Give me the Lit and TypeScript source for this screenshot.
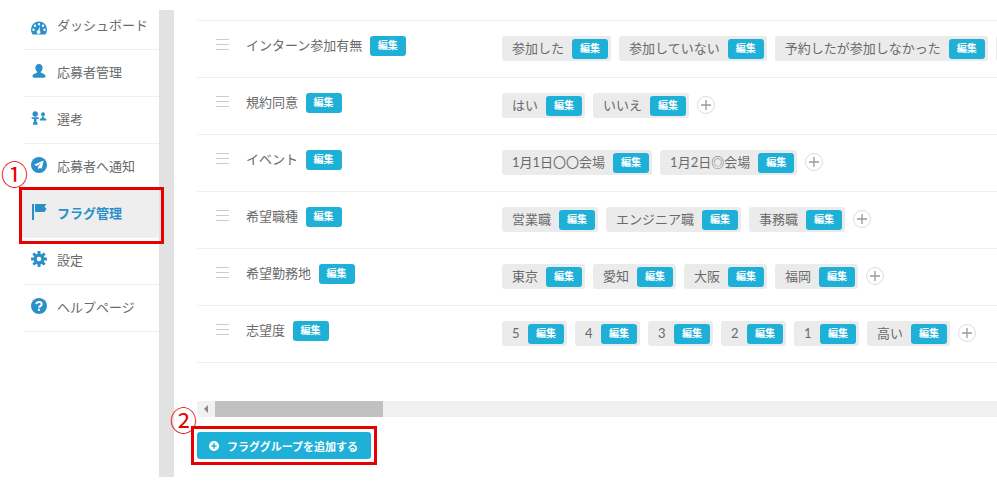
import { LitElement, html, css, svg } from "lit";
import { customElement } from "lit/decorators.js";

const BLUE = "#2b8fc9";
const icons: Record<string, unknown> = {
  dash: svg`<svg class="low" viewBox="0 0 16 16" width="16" height="16"><path fill="${BLUE}" fill-rule="evenodd" d="M8 1.500a8 8 0 0 1 8 8c0 1.900-.6 3.600-1.600 5H1.600A8 8 0 0 1 0 9.500a8 8 0 0 1 8-8zM8 3a1.200 1.200 0 1 0 0 2.400A1.200 1.200 0 0 0 8 3zM4 4.600a1.200 1.200 0 1 0 0 2.400 1.200 1.200 0 0 0 0-2.400zM12 4.600a1.200 1.200 0 1 0 0 2.400 1.200 1.200 0 0 0 0-2.400zM2.500 8.500a1.200 1.200 0 1 0 0 2.400 1.200 1.200 0 0 0 0-2.400zM13.500 8.500a1.200 1.200 0 1 0 0 2.400 1.200 1.200 0 0 0 0-2.400zM8.900 6.500 7.200 10.300a1.800 1.800 0 1 0 1.500.4z"/></svg>`,
  user: svg`<svg viewBox="0 0 16 16" width="16" height="16"><path fill="${BLUE}" d="M8 1c2.200 0 3.600 1.700 3.600 3.900 0 1.500-.7 2.900-1.700 3.700v.9c0 .6 4.600 1.300 4.600 3.600 0 1-.7 1.600-1.700 1.600H3.200c-1 0-1.700-.6-1.700-1.600 0-2.300 4.600-3 4.600-3.600v-.9C5.100 7.800 4.400 6.400 4.400 4.900 4.400 2.700 5.800 1 8 1z"/></svg>`,
  select: svg`<svg viewBox="0 0 16 16" width="16" height="16"><g fill="${BLUE}"><circle cx="4.200" cy="4" r="2.700"/><path d="M.7 7.300h7v1.800H5.500v3l1 .5v2.200H2v-2.200l1-.5v-3H.7z"/><circle cx="12" cy="4.300" r="2"/><path d="M11 6.500h2l.4 1.700 2 .9v1.300H8.800V9.100l1.800-.9z"/></g></svg>`,
  plane: svg`<svg viewBox="0 0 16 16" width="16" height="16"><circle cx="8" cy="8" r="8" fill="${BLUE}"/><path fill="#fff" d="M12.600 3.400 3 7.800l2.900 1.300 4.500-3.400-3.300 4v2.800l1.700-1.800 1.900 1z"/></svg>`,
  flag: svg`<svg viewBox="0 0 16 18" width="16" height="18"><path fill="${BLUE}" d="M1 1h2v16H1zM4 1h11.500l-2 2.500 2 2.500-2 3H4z"/></svg>`,
  gear: svg`<svg viewBox="0 0 16 16" width="16" height="16"><g fill="${BLUE}"><path fill-rule="evenodd" d="M8 2.500a5.500 5.500 0 1 1 0 11 5.500 5.500 0 0 1 0-11zM8 5.700a2.300 2.300 0 1 0 0 4.600 2.300 2.300 0 0 0 0-4.600z"/>${[0, 45, 90, 135, 180, 225, 270, 315].map(
    (a) => svg`<rect x="6.500" y="0" width="3" height="3.500" rx=".5" transform="rotate(${a} 8 8)"/>`
  )}</g></svg>`,
  help: svg`<svg viewBox="0 0 16 16" width="16" height="16"><circle cx="8" cy="8" r="8" fill="${BLUE}"/><path fill="none" stroke="#fff" stroke-width="2" d="M5.300 6.200C5.500 4.800 6.500 4.100 8 4.100c1.600 0 2.700.8 2.700 2.100 0 1.900-2.700 1.900-2.700 3.600"/><rect x="7" y="10.800" width="2" height="2" fill="#fff"/></svg>`,
};

const NAV = [
  { icon: "dash", label: "ダッシュボード" },
  { icon: "user", label: "応募者管理" },
  { icon: "select", label: "選考" },
  { icon: "plane", label: "応募者へ通知" },
  { icon: "flag", label: "フラグ管理", active: true },
  { icon: "gear", label: "設定" },
  { icon: "help", label: "ヘルプページ" },
];

const ROWS = [
  { name: "インターン参加有無", chips: ["参加した", "参加していない", "予約したが参加しなかった", ""], noAdd: true },
  { name: "規約同意", chips: ["はい", "いいえ"] },
  { name: "イベント", chips: ["1月1日〇〇会場", "1月2日◎会場"] },
  { name: "希望職種", chips: ["営業職", "エンジニア職", "事務職"] },
  { name: "希望勤務地", chips: ["東京", "愛知", "大阪", "福岡"] },
  { name: "志望度", chips: ["5", "4", "3", "2", "1", "高い"] },
];

@customElement("app-root")
export class AppRoot extends LitElement {
  static styles = css`
    :host {
      display: block;
      width: 997px;
      height: 487px;
      position: relative;
      overflow: hidden;
      background: #fff;
      color: #6a6a6a;
      font-family: Lato, "Noto Sans CJK JP", sans-serif;
      font-size: 13px;
    }
    .page {
      display: flex;
      height: 477px;
    }
    .sidebar {
      width: 135px;
      margin-left: 24px;
      padding-top: 3px;
      flex: none;
    }
    .nav {
      display: flex;
      align-items: center;
      gap: 10px;
      padding: 0 0 4px 7px;
      box-sizing: border-box;
      height: 47px;
      border-bottom: 1px solid #f0f0f0;
      white-space: nowrap;
    }
    .nav.active {
      background: #eee;
      color: #2b8fc9;
      font-weight: 700;
      margin-left: -4px;
      padding-left: 11px;
    }
    .nav svg {
      display: block;
      flex: none;
    }
    .nav svg.low {
      margin-top: 7px;
    }
    .gutter {
      width: 15px;
      margin-top: 10px;
      background: #e2e2e2;
      flex: none;
    }
    .main {
      flex: 1;
      min-width: 0;
      padding: 20px 0 0 23px;
    }
    .table {
      border-top: 1px solid #efefef;
      height: 380px;
      overflow: hidden;
    }
    .row {
      display: flex;
      height: 57px;
      box-sizing: border-box;
      border-bottom: 1px solid #efefef;
      padding-top: 15px;
      white-space: nowrap;
    }
    .head {
      width: 305px;
      flex: none;
      display: flex;
      align-items: flex-start;
      padding-left: 19px;
      box-sizing: border-box;
    }
    .grip {
      width: 13px;
      height: 11px;
      margin-top: 3px;
      margin-right: 17px;
      flex: none;
      border-top: 1px solid #ccc;
      border-bottom: 1px solid #ccc;
      box-sizing: border-box;
      display: flex;
      align-items: center;
    }
    .grip::before {
      content: "";
      display: block;
      width: 100%;
      height: 1px;
      background: #ccc;
    }
    .name {
      line-height: 19px;
      margin-right: 7.5px;
    }
    .badge {
      display: inline-block;
      width: 36px;
      height: 20px;
      line-height: 18px;
      text-align: center;
      background: #1fb0d8;
      color: #fff;
      font-size: 10px;
      font-weight: 700;
      border-radius: 3px;
      flex: none;
    }
    .chips {
      display: flex;
      align-items: flex-start;
      gap: 8px;
      flex: none;
    }
    .chip {
      display: flex;
      align-items: center;
      gap: 8px;
      height: 25px;
      padding: 0 3px 0 10px;
      background: #ebebeb;
      border-radius: 3px;
      flex: none;
      line-height: 25px;
    }
    .chip .label {
      min-width: 8px;
    }
    .chip.blank {
      width: 60px;
      padding: 0;
    }
    .add {
      width: 18px;
      height: 18px;
      margin-top: 3px;
      border: 1px solid #ddd;
      border-radius: 50%;
      box-sizing: border-box;
      display: flex;
      align-items: center;
      justify-content: center;
      flex: none;
    }
    .scrollbar {
      height: 16px;
      background: #f1f1f1;
      display: flex;
      align-items: center;
    }
    .arrow {
      width: 18px;
      display: flex;
      justify-content: center;
      flex: none;
    }
    .arrow::before {
      content: "";
      border: 4px solid transparent;
      border-right: 4px solid #888;
      border-left: 0;
    }
    .thumb {
      width: 168px;
      height: 100%;
      background: #c1c1c1;
    }
    .addgroup {
      display: flex;
      align-items: center;
      gap: 8px;
      width: 174px;
      height: 27px;
      margin-top: 15px;
      padding-left: 12px;
      box-sizing: border-box;
      background: #1fb0d8;
      color: #fff;
      font-size: 11px;
      font-weight: 700;
      border-radius: 3px;
      white-space: nowrap;
    }
    .addgroup svg {
      display: block;
      flex: none;
    }
    .redbox {
      position: absolute;
      border: 3px solid #e60000;
      box-sizing: border-box;
    }
    .box1 {
      left: 19px;
      top: 187px;
      width: 145px;
      height: 57px;
    }
    .box2 {
      left: 191px;
      top: 426px;
      width: 186px;
      height: 39px;
    }
    .mark {
      position: absolute;
      color: #e60000;
      font-family: "Noto Sans CJK JP", sans-serif;
      font-size: 27px;
      line-height: 27px;
    }
    .mark1 {
      left: 1px;
      top: 160px;
    }
    .mark2 {
      left: 170px;
      top: 406px;
    }
  `;

  render() {
    return html`
      <div class="page">
        <nav class="sidebar">
          ${NAV.map(
            (n) => html`<div class="nav ${n.active ? "active" : ""}">${icons[n.icon]}<span>${n.label}</span></div>`
          )}
        </nav>
        <div class="gutter"></div>
        <main class="main">
          <div class="table">
            ${ROWS.map(
              (r) => html`<div class="row">
                <div class="head">
                  <span class="grip"></span>
                  <span class="name">${r.name}</span>
                  <span class="badge">編集</span>
                </div>
                <div class="chips">
                  ${r.chips.map((c) =>
                    c
                      ? html`<div class="chip"><span class="label">${c}</span><span class="badge">編集</span></div>`
                      : html`<div class="chip blank"></div>`
                  )}
                  ${r.noAdd
                    ? ""
                    : html`<div class="add">
                        <svg viewBox="0 0 10 10" width="10" height="10"><path d="M5 0v10M0 5h10" stroke="#999" stroke-width="1.300" /></svg>
                      </div>`}
                </div>
              </div>`
            )}
          </div>
          <div class="scrollbar"><span class="arrow"></span><span class="thumb"></span></div>
          <div class="addgroup">
            <svg viewBox="0 0 10 10" width="10" height="10"><circle cx="5" cy="5" r="5" fill="#fff" /><path d="M5 2.300v5.400M2.300 5h5.400" stroke="#1fb0d8" stroke-width="1.500" /></svg>
            <span>フラググループを追加する</span>
          </div>
        </main>
      </div>
      <div class="redbox box1"></div>
      <div class="redbox box2"></div>
      <span class="mark mark1">①</span>
      <span class="mark mark2">②</span>
    `;
  }
}
